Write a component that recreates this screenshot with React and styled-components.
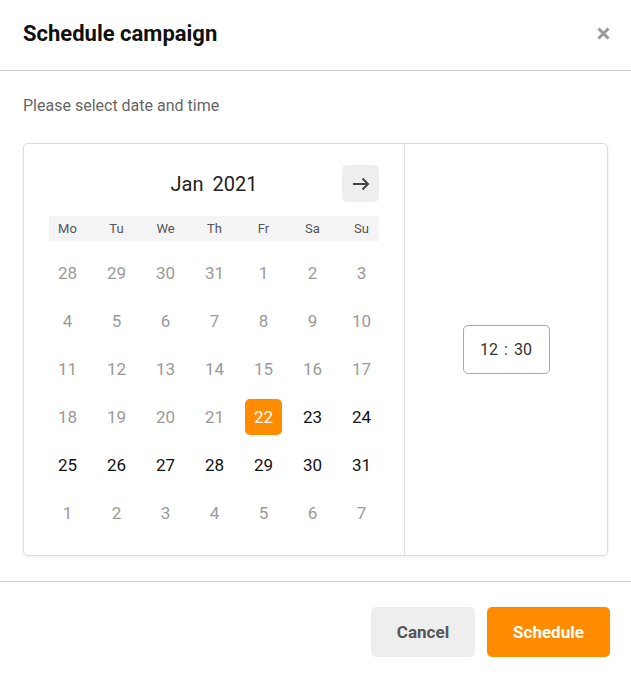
import styled, { createGlobalStyle } from "styled-components";

const Global = createGlobalStyle`
  body {
    margin: 0;
    background: #fff;
    font-family: Roboto, "Liberation Sans", sans-serif;
  }
`;

const Modal = styled.div`
  width: 631px;
  background: #fff;
`;

const Header = styled.div`
  height: 71px;
  box-sizing: border-box;
  border-bottom: 1px solid #ccc;
  display: flex;
  align-items: center;
  justify-content: space-between;
  padding: 0 21px 3px 23px;
`;

const Title = styled.h1`
  margin: 0;
  font-size: 22px;
  font-weight: 700;
  color: #111;
`;

const Close = styled.button`
  border: 0;
  background: none;
  padding: 0;
  width: 13px;
  height: 13px;
  display: flex;
  cursor: pointer;
`;

const Body = styled.div`
  padding: 25px 23px 25px;
  border-bottom: 1px solid #ccc;
`;

const Hint = styled.p`
  margin: 0 0 27px;
  font-size: 16px;
  line-height: 20px;
  color: #666;
`;

const Card = styled.div`
  display: flex;
  border: 1px solid #ddd;
  border-radius: 5px;
  box-shadow: 0 1px 3px rgba(0, 0, 0, 0.08);
  height: 413px;
  box-sizing: border-box;
`;

const Calendar = styled.div`
  width: 381px;
  box-sizing: border-box;
  padding: 21px 25px 0;
  border-right: 1px solid #ddd;
`;

const MonthBar = styled.div`
  position: relative;
  height: 37px;
  display: flex;
  align-items: center;
  justify-content: center;
  margin-bottom: 14px;
`;

const MonthLabel = styled.div`
  font-size: 20px;
  color: #222;
  display: flex;
  gap: 9px;
`;

const NextButton = styled.button`
  position: absolute;
  right: 0;
  top: 0;
  width: 37px;
  height: 37px;
  border: 0;
  border-radius: 5px;
  background: #eee;
  display: flex;
  align-items: center;
  justify-content: center;
  padding: 0;
  cursor: pointer;
`;

const Grid = styled.div`
  display: grid;
  grid-template-columns: repeat(7, 37px);
  column-gap: 12px;
`;

const WeekRow = styled(Grid)`
  background: #f4f4f4;
  height: 25px;
  align-items: center;
  margin-bottom: 14px;
`;

const WeekDay = styled.div`
  text-align: center;
  font-size: 13px;
  color: #555;
`;

const Days = styled(Grid)`
  row-gap: 12px;
`;

const Day = styled.div`
  height: 36px;
  border-radius: 5px;
  display: flex;
  align-items: center;
  justify-content: center;
  font-size: 17px;
  color: ${(p) => (p.$selected ? "#fff" : p.$muted ? "#9a9a9a" : "#111")};
  background: ${(p) => (p.$selected ? "#ff8c00" : "transparent")};
`;

const TimePanel = styled.div`
  flex: 1;
  display: flex;
  align-items: center;
  justify-content: center;
`;

const TimeBox = styled.div`
  width: 87px;
  height: 49px;
  box-sizing: border-box;
  border: 1px solid #aaa;
  border-radius: 5px;
  display: flex;
  align-items: center;
  justify-content: center;
  gap: 6px;
  font-size: 16px;
  color: #333;
`;

const Footer = styled.div`
  display: flex;
  justify-content: flex-end;
  gap: 12px;
  padding: 25px 21px 22px;
`;

const Button = styled.button`
  height: 50px;
  border: 0;
  border-radius: 5px;
  font-family: inherit;
  font-size: 17px;
  font-weight: 700;
  cursor: pointer;
  width: ${(p) => (p.$primary ? "123px" : "104px")};
  background: ${(p) => (p.$primary ? "#ff8c00" : "#eee")};
  color: ${(p) => (p.$primary ? "#fff" : "#555")};
`;

const weekDays = ["Mo", "Tu", "We", "Th", "Fr", "Sa", "Su"];

const days = [
  ...[28, 29, 30, 31].map((d) => ({ d, muted: true })),
  ...Array.from({ length: 31 }, (_, i) => ({ d: i + 1, muted: i + 1 < 22, selected: i + 1 === 22 })),
  ...[1, 2, 3, 4, 5, 6, 7].map((d) => ({ d, muted: true })),
];

export default function App() {
  return (
    <Modal>
      <Global />
      <Header>
        <Title>Schedule campaign</Title>
        <Close aria-label="close">
          <svg width="13" height="13" viewBox="0 0 13 13">
            <path d="M1.5 1.5L11.5 11.5M11.5 1.5L1.5 11.5" stroke="#999" strokeWidth="3" />
          </svg>
        </Close>
      </Header>
      <Body>
        <Hint>Please select date and time</Hint>
        <Card>
          <Calendar>
            <MonthBar>
              <MonthLabel>
                <span>Jan</span>
                <span>2021</span>
              </MonthLabel>
              <NextButton aria-label="next month">
                <svg width="18" height="14" viewBox="0 0 18 14">
                  <path d="M1 7H16M10.5 1.5L16 7L10.5 12.5" stroke="#444" strokeWidth="2" fill="none" />
                </svg>
              </NextButton>
            </MonthBar>
            <WeekRow>
              {weekDays.map((w) => (
                <WeekDay key={w}>{w}</WeekDay>
              ))}
            </WeekRow>
            <Days>
              {days.map((x, i) => (
                <Day key={i} $muted={x.muted} $selected={x.selected}>
                  {x.d}
                </Day>
              ))}
            </Days>
          </Calendar>
          <TimePanel>
            <TimeBox>
              <span>12</span>
              <span>:</span>
              <span>30</span>
            </TimeBox>
          </TimePanel>
        </Card>
      </Body>
      <Footer>
        <Button>Cancel</Button>
        <Button $primary>Schedule</Button>
      </Footer>
    </Modal>
  );
}
